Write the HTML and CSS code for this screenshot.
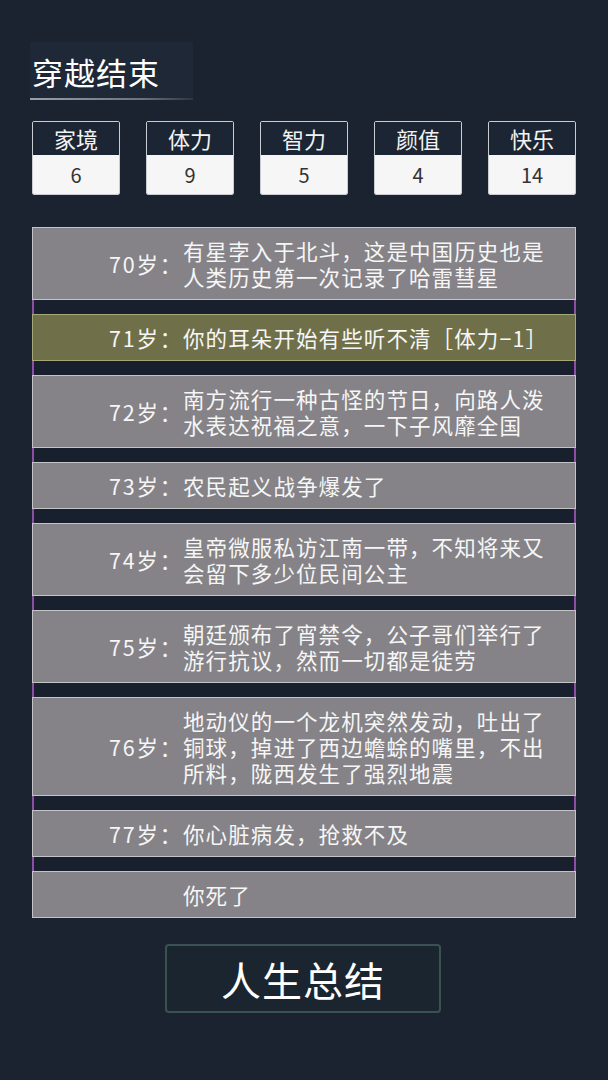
FILE: index.html
```html
<!DOCTYPE html>
<html lang="zh">
<head>
<meta charset="utf-8">
<link rel="stylesheet" href="styles.css">
</head>
<body>
<div class="page">
  <div class="title-wrap">
    <h1 class="title">穿越结束</h1>
  </div>

  <div class="stats">
    <div class="stat"><div class="stat-name">家境</div><div class="stat-val">6</div></div>
    <div class="stat"><div class="stat-name">体力</div><div class="stat-val">9</div></div>
    <div class="stat"><div class="stat-name">智力</div><div class="stat-val">5</div></div>
    <div class="stat"><div class="stat-name">颜值</div><div class="stat-val">4</div></div>
    <div class="stat"><div class="stat-name">快乐</div><div class="stat-val">14</div></div>
  </div>

  <div class="events">
    <div class="row"><div class="age">70岁：</div><div class="text">有星孛入于北斗，这是中国历史也是人类历史第一次记录了哈雷彗星</div></div>
    <div class="gap"></div>
    <div class="row olive"><div class="age">71岁：</div><div class="text">你的耳朵开始有些听不清［体力−1］</div></div>
    <div class="gap"></div>
    <div class="row"><div class="age">72岁：</div><div class="text">南方流行一种古怪的节日，向路人泼水表达祝福之意，一下子风靡全国</div></div>
    <div class="gap"></div>
    <div class="row"><div class="age">73岁：</div><div class="text">农民起义战争爆发了</div></div>
    <div class="gap"></div>
    <div class="row"><div class="age">74岁：</div><div class="text">皇帝微服私访江南一带，不知将来又会留下多少位民间公主</div></div>
    <div class="gap"></div>
    <div class="row"><div class="age">75岁：</div><div class="text">朝廷颁布了宵禁令，公子哥们举行了游行抗议，然而一切都是徒劳</div></div>
    <div class="gap"></div>
    <div class="row"><div class="age">76岁：</div><div class="text">地动仪的一个龙机突然发动，吐出了铜球，掉进了西边蟾蜍的嘴里，不出所料，陇西发生了强烈地震</div></div>
    <div class="gap"></div>
    <div class="row"><div class="age">77岁：</div><div class="text">你心脏病发，抢救不及</div></div>
    <div class="gap"></div>
    <div class="row"><div class="age"></div><div class="text">你死了</div></div>
  </div>

  <div class="actions">
    <button class="summary">人生总结</button>
  </div>
</div>
</body>
</html>
```

FILE: styles.css
```css
html, body {
  margin: 0;
  padding: 0;
  background: #1b2331;
}
body {
  font-family: "Noto Sans CJK SC", "Noto Sans", sans-serif;
  color: #f4f4f4;
  width: 608px;
  height: 1080px;
  overflow: hidden;
  text-spacing-trim: space-all;
}
.page {
  padding: 42px 32px 0 32px;
}
.title-wrap {
  margin-left: -2px;
  width: 163px;
  height: 58px;
  background: #1e2837;
  border-bottom: 2px solid #6c7480;
  border-image: linear-gradient(to right, #9aa1aa, #6a717c 70%, #2c3440) 1;
  box-sizing: border-box;
}
.title {
  margin: 0;
  padding: 11px 0 0 2px;
  font-size: 31px;
  font-weight: 400;
  line-height: 38px;
  color: #ffffff;
  letter-spacing: 1px;
}
.stats {
  display: flex;
  gap: 26px;
  margin-top: 21px;
}
.stat {
  width: 88px;
  box-sizing: border-box;
  border: 1px solid #c9ccd0;
  border-radius: 2px;
  overflow: hidden;
}
.stat-name {
  height: 33px;
  background: #1c2533;
  color: #f2f2f2;
  font-size: 22px;
  line-height: 33px;
  text-align: center;
}
.stat-val {
  height: 39px;
  background: #f6f6f6;
  color: #333333;
  font-size: 20px;
  line-height: 40px;
  text-align: center;
}
.events {
  margin-top: 32px;
  width: 544px;
}
.row {
  display: flex;
  align-items: center;
  background: #858387;
  border: 1px solid #c4c4c6;
  padding: 10px 0 9px 0;
  font-size: 21.5px;
  line-height: 26px;
  color: #f6f6f6;
}
.row.olive {
  background: #6f7049;
  border-color: #a6a87a;
}
.age {
  width: 150px;
  flex: none;
  text-align: right;
  letter-spacing: 1.8px;
}
.text {
  width: 368px;
  letter-spacing: 1.1px;
}
.gap {
  height: 14px;
  background: #181f2d;
  border-left: 2px solid #8d4fa6;
  border-right: 2px solid #8d4fa6;
}
.actions {
  display: flex;
  justify-content: center;
  margin-top: 26px;
  padding-right: 2px;
}
.summary {
  width: 276px;
  height: 69px;
  background: #1a2530;
  border: 2px solid #3b5252;
  border-radius: 4px;
  color: #ffffff;
  font-family: "Noto Sans CJK SC", sans-serif;
  font-size: 40px;
  letter-spacing: 1px;
  line-height: 1;
  padding: 0;
}
```
